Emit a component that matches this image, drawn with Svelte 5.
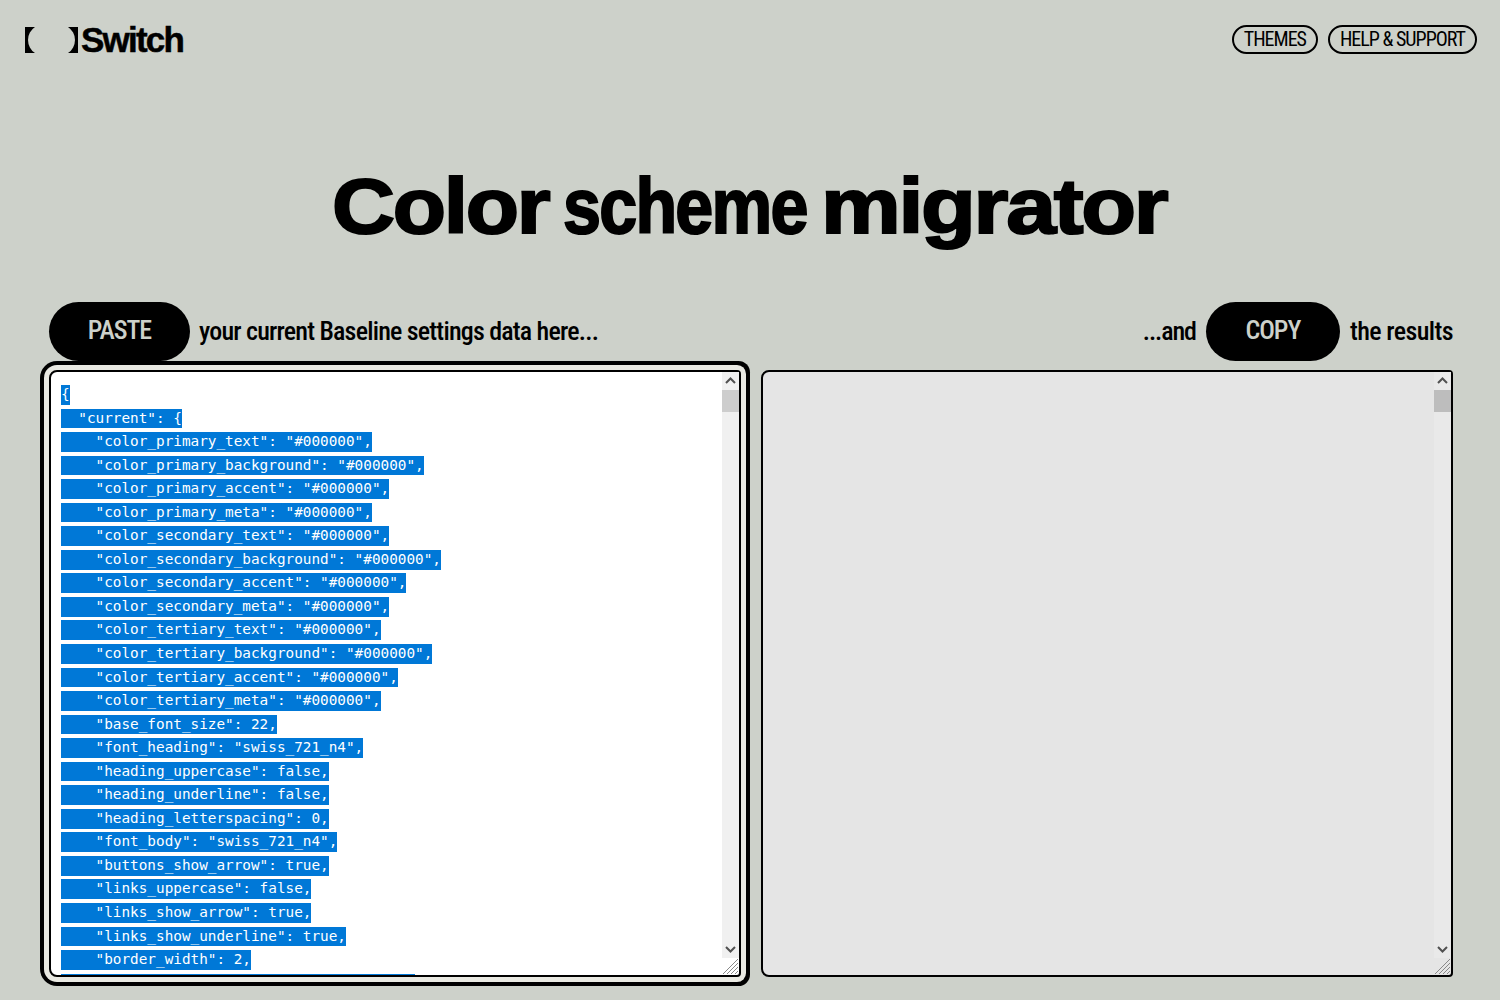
<script>
  const colorKeys = ['text', 'background', 'accent', 'meta'];
  const tiers = ['primary', 'secondary', 'tertiary'];

  // settings object, same key order as the theme export
  const base = {};
  for (const tier of tiers) {
    for (const key of colorKeys) base[`color_${tier}_${key}`] = '#000000';
  }
  Object.assign(base, {
    base_font_size: 22,
    font_heading: 'swiss_721_n4',
    heading_uppercase: false,
    heading_underline: false,
    heading_letterspacing: 0,
    font_body: 'swiss_721_n4',
    buttons_show_arrow: true,
    links_uppercase: false,
    links_show_arrow: true,
    links_show_underline: true,
    border_width: 2,
    section_padding_vertical_large: 400
  });

  const lines = JSON.stringify({ current: base }, null, 2).split('\n').slice(0, 27);
</script>

{#snippet scrollbar()}
  <div class="scrollbar">
    <div class="arrow">
      <svg width="11" height="7" viewBox="0 0 11 7"><path d="M1 6l4.5-4.5L10 6" /></svg>
    </div>
    <div class="thumb"></div>
    <div class="track"></div>
    <div class="arrow">
      <svg width="11" height="7" viewBox="0 0 11 7"><path d="M1 1l4.5 4.5L10 1" /></svg>
    </div>
    <div class="grip">
      <svg width="17" height="17" viewBox="0 0 17 17">
        <path d="M16 1L1 16M16 5L5 16M16 9L9 16M16 13L13 16" />
      </svg>
    </div>
  </div>
{/snippet}

<div class="page">
  <header class="topbar">
    <a class="logo" href="#top">
      <svg width="53" height="26" viewBox="0 0 53 26" aria-hidden="true">
        <path d="M0 0h10A15.6 15.6 0 0 0 10 26H0z" />
        <path d="M53 0H43A15.6 15.6 0 0 1 43 26H53z" />
      </svg>
      <span>Switch</span>
    </a>
    <nav>
      <a href="#themes">THEMES</a>
      <a href="#help">HELP &amp; SUPPORT</a>
    </nav>
  </header>

  <h1>
    <span class="w-color">Color</span>
    <span class="w-scheme">scheme</span>
    <span class="w-migrator">migrator</span>
  </h1>

  <div class="actions">
    <div class="action">
      <button class="paste">PASTE</button>
      <span class="lead">your current Baseline settings data here...</span>
    </div>
    <div class="action">
      <span class="and">...and</span>
      <button class="copy">COPY</button>
      <span class="results">the results</span>
    </div>
  </div>

  <div class="panels">
    <div class="panel">
      <div class="editor focused">
        {#each lines as line}
          <div class="line"><span class="sel">{line}</span></div>
        {/each}
      </div>
      {@render scrollbar()}
    </div>
    <div class="panel output">
      <div class="editor"></div>
      {@render scrollbar()}
    </div>
  </div>
</div>

<style>
  :global(body) {
    margin: 0;
    background: #cdd1ca;
    color: #000;
    font-family: Roboto, "Liberation Sans", sans-serif;
  }

  .page {
    height: 1000px;
    overflow: hidden;
  }

  .topbar {
    display: flex;
    justify-content: space-between;
    align-items: center;
    padding: 20px 23px 0 25px;
    height: 40px;
  }

  .logo {
    display: flex;
    align-items: center;
    color: #000;
    text-decoration: none;
    font-family: "Liberation Sans", sans-serif;
    font-weight: 700;
    font-size: 35px;
    letter-spacing: -1.8px;
    -webkit-text-stroke: 0.5px #000;
  }

  .logo svg {
    margin-right: 3px;
  }

  nav {
    display: flex;
    gap: 10px;
    margin-top: -2px;
  }

  nav a {
    border: 2px solid #000;
    border-radius: 15px;
    height: 25px;
    line-height: 24px;
    padding: 0 10px;
    color: #000;
    text-decoration: none;
    font-size: 20px;
    font-stretch: 75%;
    letter-spacing: -1px;
  }

  h1 {
    display: flex;
    justify-content: center;
    gap: 13px;
    margin: 98px 0 0;
    font-family: "Liberation Sans", sans-serif;
    font-size: 78px;
    line-height: 96px;
    font-weight: 700;
    letter-spacing: -2px;
    -webkit-text-stroke: 2px #000;
  }

  h1 span {
    display: block;
    white-space: nowrap;
    transform-origin: left center;
  }

  .w-color {
    width: 218px;
    transform: scaleX(1.118);
  }

  .w-scheme {
    width: 245px;
    transform: scaleX(0.875);
  }

  .w-migrator {
    width: 348px;
    transform: scaleX(1.15);
  }

  .actions {
    display: flex;
    justify-content: space-between;
    align-items: center;
    margin-top: 48px;
    padding: 0 47px 0 49px;
  }

  .action {
    display: flex;
    align-items: center;
    gap: 10px;
    font-size: 26px;
    font-weight: 500;
    font-stretch: 75%;
    letter-spacing: -0.8px;
  }

  .action span {
    padding-bottom: 2px;
  }

  .lead {
    margin-left: -1px;
  }

  .and {
    letter-spacing: -1.1px;
  }

  .results {
    letter-spacing: -0.6px;
  }

  button {
    height: 59px;
    padding: 0 0 3px;
    border: 0;
    border-radius: 30px;
    background: #000;
    color: #cdd1ca;
    font: inherit;
    letter-spacing: -1px;
  }

  .paste {
    width: 141px;
  }

  .copy {
    width: 134px;
  }

  .panels {
    display: grid;
    grid-template-columns: 692px 692px;
    gap: 20px;
    margin-top: 9px;
    padding-left: 49px;
  }

  .panel {
    position: relative;
    height: 607px;
  }

  .editor {
    box-sizing: border-box;
    height: 100%;
    padding: 13px 10px 0;
    border: 2px solid #000;
    border-radius: 8px 4px 4px 8px;
    background: #fff;
    font-family: "DejaVu Sans Mono", monospace;
    font-size: 14.35px;
    white-space: pre;
    overflow: hidden;
  }

  .focused {
    box-shadow: 0 0 0 5px #e9e9e2, 0 0 0 9px #000;
  }

  .output .editor {
    background: #e5e5e5;
  }

  .line {
    height: 23.55px;
  }

  .sel {
    display: inline-block;
    height: 19.7px;
    line-height: 18px;
    vertical-align: top;
    background: #0078d7;
    color: #fff;
  }

  .scrollbar {
    position: absolute;
    top: 2px;
    right: 2px;
    bottom: 2px;
    width: 17px;
    display: flex;
    flex-direction: column;
    --bar: #f0f0f0;
    --thumb: #cdcdcd;
  }

  .output .scrollbar {
    --bar: #e9e9e9;
    --thumb: #bdbdbd;
  }

  .arrow {
    flex: none;
    height: 17px;
    display: flex;
    align-items: center;
    justify-content: center;
    background: var(--bar);
  }

  .arrow path {
    fill: none;
    stroke: #505050;
    stroke-width: 2;
  }

  .thumb {
    flex: none;
    height: 22px;
    border-top: 1px solid var(--bar);
    background: var(--thumb);
  }

  .track {
    flex: 1;
    background: var(--bar);
  }

  .grip {
    flex: none;
    height: 17px;
  }

  .grip svg {
    display: block;
  }

  .grip path {
    fill: none;
    stroke: #888;
    stroke-width: 1;
  }
</style>
